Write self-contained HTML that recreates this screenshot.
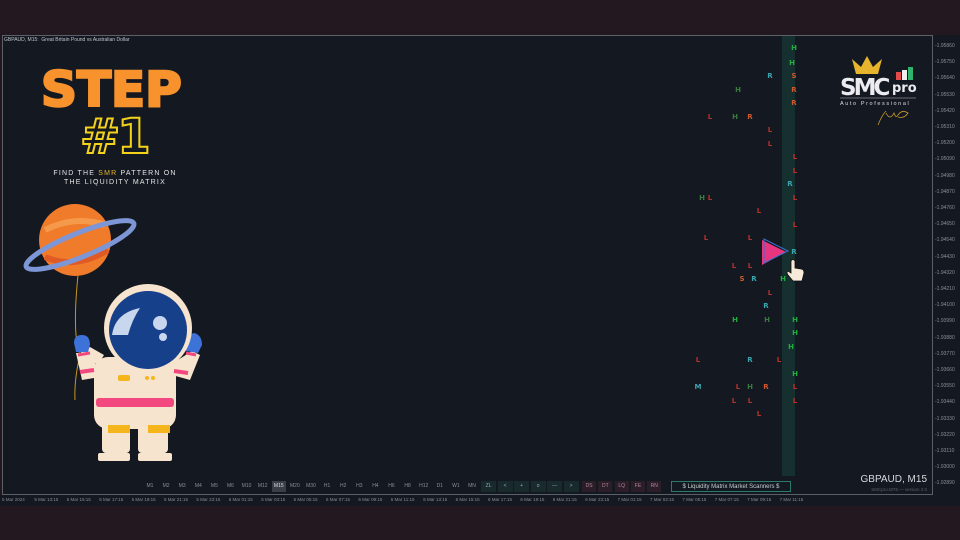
<!DOCTYPE html>
<html><head><meta charset="utf-8"><style>
*{margin:0;padding:0;box-sizing:border-box}
body{width:960px;height:540px;background:#231820;position:relative;overflow:hidden;font-family:"Liberation Sans",sans-serif}
#chart{position:absolute;left:2px;top:35px;width:931px;height:460px;background:#141821;border:1px solid #5b5f68}
#below{position:absolute;left:0;top:495px;width:960px;height:11px;background:#141821}
#rightax{position:absolute;left:933px;top:35px;width:27px;height:471px;background:#141821}
.t{position:absolute;font-size:5px;color:#8a8e96;white-space:nowrap}
.m{position:absolute;font-size:7px;font-family:"DejaVu Sans",sans-serif;font-weight:bold;transform:translate(-50%,-50%)}
.g{color:#1fae3a}.r{color:#b8322c}.o{color:#d0582a}.c{color:#3ba6b0}.dg{color:#3b7a3f}
.btn{position:absolute;top:481px;height:11px;font-size:5px;color:#8a8e96;line-height:11px;text-align:center}
</style></head><body>
<div id="chart"></div><div id="below"></div><div id="rightax"></div>
<div class="t" style="left:4px;top:37px;color:#c0c4ca">GBPAUD, M15:&nbsp; Great Britain Pound vs Australian Dollar</div>
<div style="position:absolute;left:782px;top:36px;width:13px;height:440px;background:#16302f"></div>

<div style="position:absolute;left:41px;top:66px;font-family:'DejaVu Sans',sans-serif;font-weight:900;font-size:48px;color:#f7922d;-webkit-text-stroke:2.5px #f7922d;letter-spacing:0px;line-height:1;transform:scaleX(1.04);transform-origin:left top">STEP</div>
<div style="position:absolute;left:80px;top:113px;font-family:'DejaVu Sans',sans-serif;font-weight:900;font-size:48px;color:#141821;-webkit-text-stroke:2px #f3d21b;line-height:1;letter-spacing:-3px">#1</div>
<div style="position:absolute;left:40px;top:169px;width:150px;text-align:center;font-size:7px;letter-spacing:1.2px;color:#e4e4e4;line-height:9px">FIND THE <span style="color:#e9b331">SMR</span> PATTERN ON<br>THE LIQUIDITY MATRIX</div>

<svg style="position:absolute;left:20px;top:195px" width="200" height="270" viewBox="0 0 200 270">
<path d="M58 80 Q52 140 60 160 Q54 185 55 205" stroke="#c9961d" stroke-width="1" fill="none"/>
<circle cx="55" cy="45" r="36" fill="#f07b2a"/>
<path d="M25 35 Q55 20 85 30" stroke="#f59a4a" stroke-width="6" fill="none"/>
<path d="M25 62 Q55 75 88 55" stroke="#e05a25" stroke-width="6" fill="none"/>
<ellipse cx="60" cy="50" rx="58" ry="12" transform="rotate(-22 60 50)" fill="none" stroke="#7d96d6" stroke-width="5"/>
<rect x="82" y="203" width="28" height="55" rx="4" fill="#f7e4cf"/>
<rect x="118" y="203" width="30" height="55" rx="4" fill="#f7e4cf"/>
<rect x="74" y="162" width="82" height="72" rx="14" fill="#f7e4cf"/>
<rect x="76" y="203" width="78" height="9" rx="3" fill="#f2477f"/>
<rect x="88" y="230" width="22" height="8" fill="#f4b61c"/><rect x="128" y="230" width="22" height="8" fill="#f4b61c"/>
<path d="M78 170 L60 158 L70 152 L84 160Z" fill="#f7e4cf"/>
<path d="M56 158 L62 185 L80 182 L72 158Z" fill="#f7e4cf"/>
<path d="M150 170 L172 156 L180 160 L170 185 L152 180Z" fill="#f7e4cf"/>
<line x1="60" y1="177" x2="74" y2="175" stroke="#f2477f" stroke-width="4"/>
<line x1="168" y1="178" x2="154" y2="176" stroke="#f2477f" stroke-width="4"/>
<line x1="58" y1="160" x2="70" y2="158" stroke="#f2477f" stroke-width="3"/>
<line x1="176" y1="160" x2="166" y2="158" stroke="#f2477f" stroke-width="3"/>
<path d="M54 148 Q54 140 62 140 Q70 140 70 150 L68 157 L56 157Z" fill="#3d72d8"/>
<path d="M166 148 Q166 140 174 138 Q182 140 182 150 L178 158 L166 156Z" fill="#3d72d8"/>
<rect x="78" y="258" width="32" height="8" rx="2" fill="#f7e4cf"/><rect x="118" y="258" width="34" height="8" rx="2" fill="#f7e4cf"/>
<rect x="98" y="180" width="12" height="6" rx="2" fill="#f4b61c"/>
<circle cx="127" cy="183" r="2" fill="#f4b61c"/><circle cx="133" cy="183" r="2" fill="#f4b61c"/>
<circle cx="94" cy="135" r="9" fill="#f3d9c4"/><circle cx="162" cy="135" r="9" fill="#f3d9c4"/>
<circle cx="128" cy="133" r="44" fill="#f7e4cf"/>
<circle cx="128" cy="135" r="39" fill="#17408a"/>
<path d="M92 140 Q95 118 120 113 Q112 125 108 140 Z" fill="#c8d6ee"/>
<circle cx="140" cy="128" r="7" fill="#c8d6ee"/><circle cx="143" cy="142" r="4" fill="#c8d6ee"/>
</svg>

<!-- logo -->
<svg style="position:absolute;left:838px;top:53px" width="85" height="75" viewBox="0 0 85 75">
<path d="M18 21 L14 6 L23 14 L29 3 L35 14 L44 6 L40 21 Z" fill="#e7b52c"/>
<text x="2" y="42" font-family="DejaVu Sans" font-weight="bold" font-size="23" fill="#ececf0" letter-spacing="-3">SMC</text>
<rect x="58" y="19" width="5" height="8" fill="#e34a4a"/><rect x="64" y="17" width="5" height="10" fill="#eee"/><rect x="70" y="14" width="5" height="13" fill="#2fb36d"/>
<text x="54" y="39" font-family="DejaVu Sans" font-weight="bold" font-size="13" fill="#ececf0">pro</text>
<line x1="2" y1="45" x2="78" y2="45" stroke="#888" stroke-width="0.7"/>
<text x="2" y="52" font-family="Liberation Sans" font-size="5.5" fill="#ddd" letter-spacing="1.6">Auto Professional</text>
<path d="M40 72 Q44 62 48 58 M48 60 Q52 68 56 60 Q58 66 60 62 Q64 56 70 60 Q66 66 60 64" stroke="#c99a2e" fill="none" stroke-width="0.8"/>
</svg>

<!-- markers -->
<div class="m g" style="left:794px;top:48px">H</div><div class="m g" style="left:792px;top:63px">H</div>
<div class="m c" style="left:770px;top:76px">R</div><div class="m o" style="left:794px;top:76px">S</div>
<div class="m dg" style="left:738px;top:90px">H</div><div class="m o" style="left:794px;top:90px">R</div>
<div class="m o" style="left:794px;top:103px">R</div>
<div class="m r" style="left:710px;top:117px">L</div><div class="m dg" style="left:735px;top:117px">H</div><div class="m o" style="left:750px;top:117px">R</div>
<div class="m r" style="left:770px;top:130px">L</div><div class="m r" style="left:770px;top:144px">L</div>
<div class="m r" style="left:795px;top:157px">L</div><div class="m r" style="left:795px;top:171px">L</div>
<div class="m c" style="left:790px;top:184px">R</div>
<div class="m dg" style="left:702px;top:198px">H</div><div class="m r" style="left:710px;top:198px">L</div><div class="m r" style="left:795px;top:198px">L</div>
<div class="m r" style="left:759px;top:211px">L</div><div class="m r" style="left:795px;top:225px">L</div>
<div class="m r" style="left:706px;top:238px">L</div><div class="m r" style="left:750px;top:238px">L</div>
<div class="m c" style="left:794px;top:252px">R</div>
<div class="m r" style="left:734px;top:266px">L</div><div class="m r" style="left:750px;top:266px">L</div>
<div class="m o" style="left:742px;top:279px">S</div><div class="m c" style="left:754px;top:279px">R</div><div class="m g" style="left:783px;top:279px">H</div>
<div class="m r" style="left:770px;top:293px">L</div><div class="m c" style="left:766px;top:306px">R</div>
<div class="m g" style="left:735px;top:320px">H</div><div class="m dg" style="left:767px;top:320px">H</div><div class="m g" style="left:795px;top:320px">H</div>
<div class="m g" style="left:795px;top:333px">H</div><div class="m g" style="left:791px;top:347px">H</div>
<div class="m r" style="left:698px;top:360px">L</div><div class="m c" style="left:750px;top:360px">R</div><div class="m r" style="left:779px;top:360px">L</div>
<div class="m g" style="left:795px;top:374px">H</div>
<div class="m c" style="left:698px;top:387px">M</div><div class="m r" style="left:738px;top:387px">L</div><div class="m dg" style="left:750px;top:387px">H</div><div class="m o" style="left:766px;top:387px">R</div><div class="m r" style="left:795px;top:387px">L</div>
<div class="m r" style="left:734px;top:401px">L</div><div class="m r" style="left:750px;top:401px">L</div><div class="m r" style="left:795px;top:401px">L</div>
<div class="m r" style="left:759px;top:414px">L</div>

<svg style="position:absolute;left:760px;top:238px" width="50" height="50">
<polygon points="2,2 26,14 2,27" fill="#e7357f"/>
<polygon points="4,1 28,13 4,25" fill="none" stroke="#3a70c8" stroke-width="1"/>
<path d="M31 23 L31 35 L28 33 Q26 34 28 37 L33 43 L42 43 L44 35 Q44 31 41 31 L35 30 L35 23 Q33 20 31 23Z" fill="#f7ead8" stroke="#111" stroke-width="0.8"/>
</svg>

<div style="position:absolute;right:33px;top:474px;font-size:10px;color:#d6d8dc;white-space:nowrap">GBPAUD, M15</div>
<div style="position:absolute;right:33px;top:487px;font-size:4.5px;color:#5c606a;white-space:nowrap">SMCpro.MT5 — version 2.0</div>

<div id="axis"></div><div id="btns"></div><div id="dates"></div>
<script>
var a='';for(var k=0;k<28;k++){var v=(1.95860-0.0011*k).toFixed(5);a+='<div class="t" style="left:935px;top:'+(43+k*16.2)+'px">-'+v+'</div>';}
document.getElementById('axis').innerHTML=a;
var tf=['M1','M2','M3','M4','M5','M6','M10','M12','M15','M20','M30','H1','H2','H3','H4','H6','H8','H12','D1','W1','MN'];
var b='',x=143;tf.forEach(function(t){b+='<div class="btn" style="left:'+x+'px;width:14px;'+(t=='M15'?'background:#3a3e47;color:#ddd;':'')+'">'+t+'</div>';x+=16.1;});
var ex=['ZL','<','+','o','—','>'];ex.forEach(function(t){b+='<div class="btn" style="left:'+x+'px;width:15px;background:#182a2c;color:#9aa">'+t+'</div>';x+=16.5;});
x+=2;['DS','DT','LQ','FE','RN'].forEach(function(t){b+='<div class="btn" style="left:'+x+'px;width:14px;background:#2c1e28;color:#b08a9a">'+t+'</div>';x+=16.3;});
b+='<div class="btn" style="left:671px;width:120px;border:1px solid #2f7a66;color:#c8d0d0;font-size:6px;line-height:10px">$ Liquidity Matrix Market Scanners $</div>';
document.getElementById('btns').innerHTML=b;
var d=['5 Mar 2024','5 Mar 13:15','5 Mar 15:15','5 Mar 17:15','5 Mar 19:15','5 Mar 21:15','5 Mar 23:15','6 Mar 01:15','6 Mar 03:15','6 Mar 05:15','6 Mar 07:15','6 Mar 09:15','6 Mar 11:15','6 Mar 13:15','6 Mar 15:15','6 Mar 17:15','6 Mar 19:15','6 Mar 21:15','6 Mar 23:15','7 Mar 01:15','7 Mar 03:15','7 Mar 05:15','7 Mar 07:15','7 Mar 09:15','7 Mar 11:15'];
var s='';d.forEach(function(t,i){s+='<div class="t" style="left:'+(2+i*32.4)+'px;top:497px;font-size:4.5px">'+t+'</div>';});
document.getElementById('dates').innerHTML=s;
</script>
</body></html>
